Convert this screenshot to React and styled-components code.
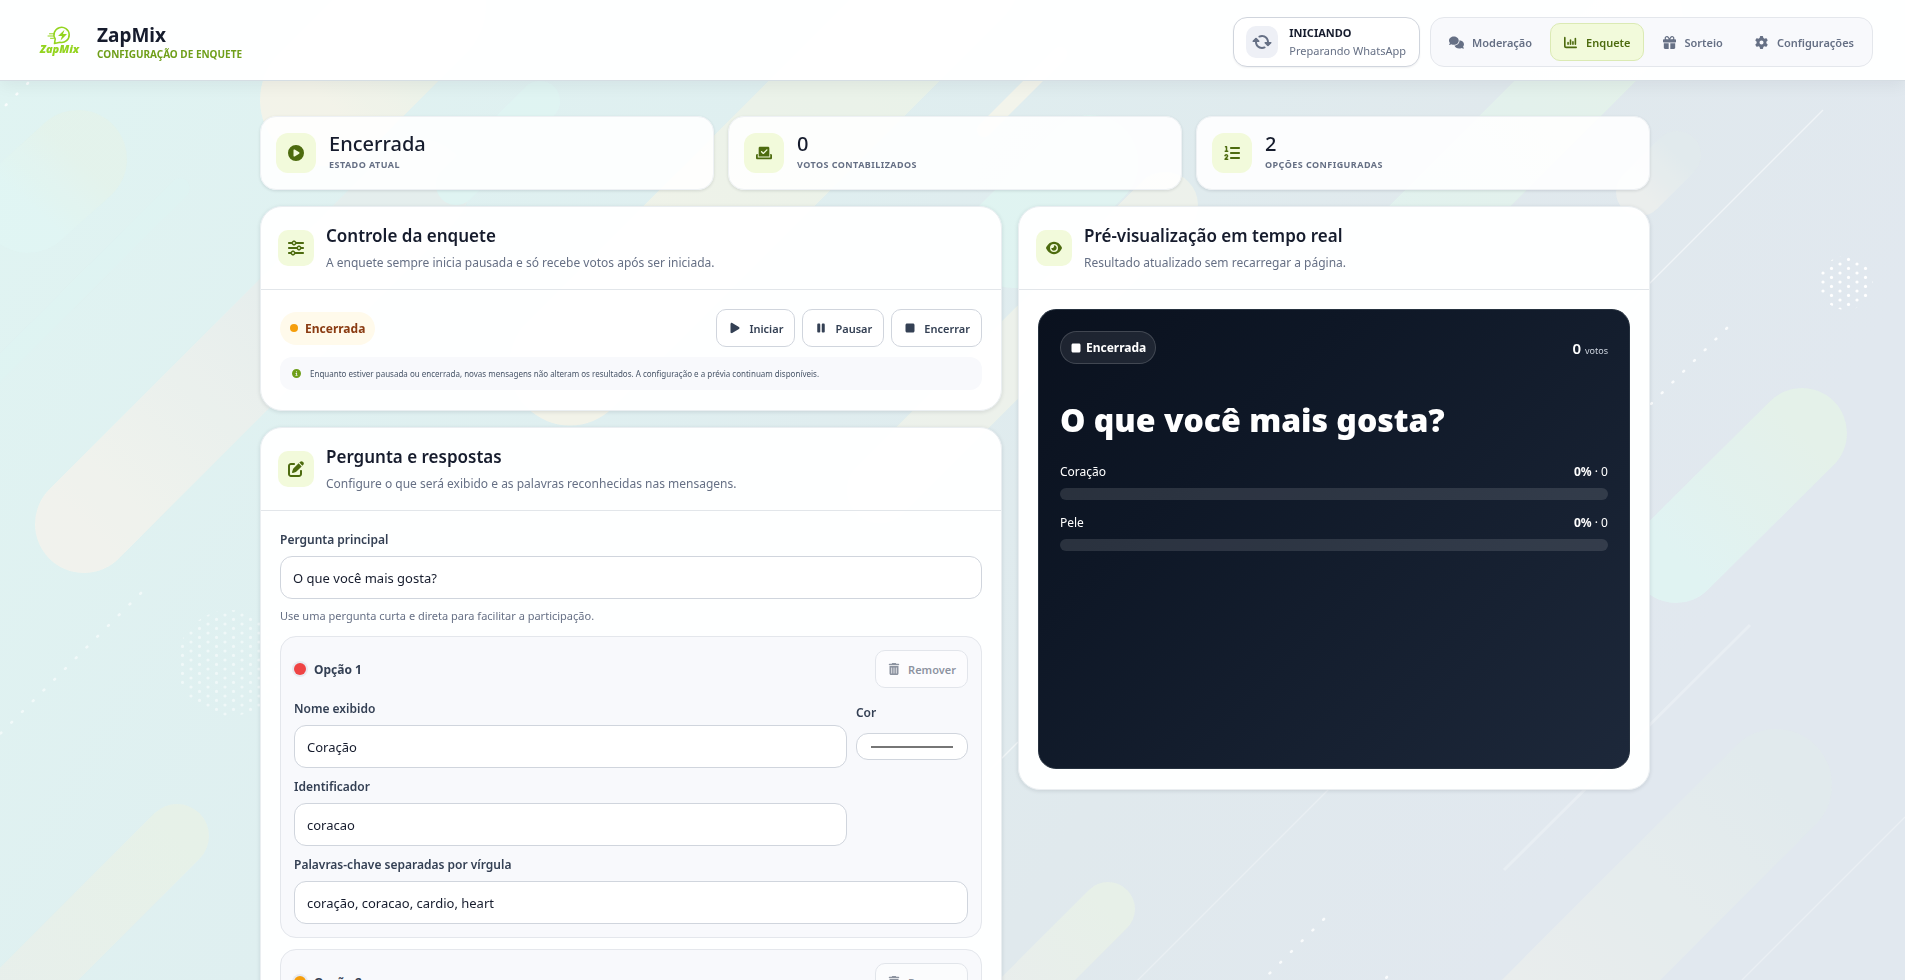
import { useState } from "react";
import styled, { createGlobalStyle, css } from "styled-components";
import {
  FaChartColumn,
  FaCheckToSlot,
  FaCircleInfo,
  FaCirclePlay,
  FaComments,
  FaEye,
  FaGear,
  FaGift,
  FaListOl,
  FaPause,
  FaPenToSquare,
  FaPlay,
  FaRotate,
  FaSliders,
  FaStop,
  FaTrashCan,
} from "react-icons/fa6";

const GlobalStyle = createGlobalStyle`
  :root {
    --ink: #161c2d;
    --text: #344054;
    --muted: #667085;
    --line: #e4e7ec;
    --border: #d0d5dd;
    --soft: #f8f9fc;
    --lime: #f2fadb;
    --lime-dark: #4d6b0f;
    --green: #6f9f1a;
  }

  * {
    box-sizing: border-box;
  }

  html {
    height: 100%;
    overflow: hidden;
  }

  body {
    margin: 0;
    height: 100%;
    overflow: hidden auto;
    scrollbar-width: none;
    font-family: "Noto Sans", "Open Sans", sans-serif;
    font-size: 13px;
    color: var(--ink);
    background: #e1edf0;
  }

  button,
  input {
    font-family: inherit;
  }
`;

const Backdrop = styled.svg`
  position: fixed;
  inset: 0;
  width: 100%;
  height: 100%;
  z-index: -1;
`;

/* Header */

const Header = styled.header`
  display: flex;
  align-items: center;
  justify-content: space-between;
  padding: 17px 32px 13px;
  background: rgba(255, 255, 255, 0.97);
  border-bottom: 1px solid #d5dde3;
  box-shadow: 0 4px 16px rgba(16, 24, 40, 0.06);
`;

const Brand = styled.div`
  display: flex;
  align-items: center;
  gap: 9px;
`;

const Logo = styled.svg`
  width: 56px;
  height: 40px;
`;

const BrandName = styled.strong`
  display: block;
  font-size: 19px;
  font-weight: 700;
  line-height: 24px;
`;

const BrandSection = styled.span`
  display: block;
  font-size: 10px;
  font-weight: 700;
  line-height: 14px;
  text-transform: uppercase;
  color: var(--green);
`;

const HeaderActions = styled.div`
  display: flex;
  align-items: center;
  gap: 10px;
`;

const Status = styled.div`
  display: flex;
  align-items: center;
  gap: 11px;
  height: 50px;
  padding: 0 13px 0 12px;
  background: #fff;
  border: 1px solid var(--border);
  border-radius: 14px;
  box-shadow: 0 1px 2px rgba(16, 24, 40, 0.06);
`;

const StatusIcon = styled.span`
  display: grid;
  place-items: center;
  width: 32px;
  height: 32px;
  border-radius: 10px;
  background: #eef0f6;
  color: #667085;
  font-size: 16px;

  svg {
    transform: rotate(45deg);
  }
`;

const StatusTitle = styled.strong`
  display: block;
  font-size: 11px;
  font-weight: 700;
  line-height: 18px;
`;

const StatusText = styled.span`
  display: block;
  font-size: 11px;
  line-height: 18px;
  color: var(--muted);
`;

const Nav = styled.nav`
  display: flex;
  gap: 5px;
  padding: 5px;
  border: 1px solid var(--line);
  border-radius: 14px;
  background: var(--soft);
`;

const NavLink = styled.a`
  display: flex;
  align-items: center;
  gap: 8px;
  height: 38px;
  padding: 0 12px;
  border: 1px solid ${({ $active }) => ($active ? "#dbeab4" : "transparent")};
  border-radius: 10px;
  background: ${({ $active }) => ($active ? "var(--lime)" : "transparent")};
  color: ${({ $active }) => ($active ? "var(--lime-dark)" : "var(--muted)")};
  font-size: 11px;
  font-weight: 600;
  text-decoration: none;

  svg {
    width: 15px;
    height: 13px;
  }
`;

/* Page */

const Page = styled.main`
  max-width: 1395px;
  margin: 0 auto;
  padding: 35px 0 32px 5px;
`;

const Stats = styled.section`
  display: grid;
  grid-template-columns: repeat(3, 1fr);
  gap: 14px;
  margin-bottom: 16px;
`;

const StatCard = styled.article`
  display: flex;
  align-items: center;
  gap: 13px;
  height: 74px;
  padding: 0 15px;
  border: 1px solid #eef1f4;
  border-radius: 16px;
  background: rgba(255, 255, 255, 0.9);
  box-shadow: 0 1px 3px rgba(16, 24, 40, 0.12);
`;

const IconTile = styled.span`
  display: grid;
  place-items: center;
  flex: none;
  width: ${({ $size }) => $size}px;
  height: ${({ $size }) => $size}px;
  border-radius: ${({ $size }) => ($size > 36 ? 12 : 10)}px;
  background: var(--lime);
  color: var(--lime-dark);
  font-size: 16px;
`;

const StatValue = styled.strong`
  display: block;
  font-size: 20px;
  font-weight: 500;
  line-height: 24px;
`;

const StatLabel = styled.span`
  display: block;
  font-size: 9px;
  font-weight: 700;
  line-height: 18px;
  letter-spacing: 0.05em;
  text-transform: uppercase;
  color: var(--muted);
`;

const Columns = styled.div`
  display: grid;
  grid-template-columns: 54fr 46fr;
  align-items: start;
  gap: 16px;
`;

const Column = styled.div`
  display: grid;
  gap: 16px;
  min-width: 0;
`;

const Panel = styled.section`
  border: 1px solid #eaeef1;
  border-radius: 22px;
  background: rgba(255, 255, 255, 0.97);
  box-shadow: 0 1px 4px rgba(16, 24, 40, 0.12);
`;

const PanelHeader = styled.header`
  display: flex;
  align-items: center;
  gap: 12px;
  height: 83px;
  padding: 0 17px;
  border-bottom: 1px solid #e2e6ea;
`;

const PanelTitle = styled.h2`
  margin: 0;
  padding-top: 2px;
  font-size: 17px;
  font-weight: 600;
  line-height: 28px;
`;

const PanelText = styled.p`
  margin: 0;
  font-size: 12px;
  line-height: 26px;
  color: var(--muted);
`;

const PanelBody = styled.div`
  padding: 19px 19px 20px;
`;

/* Poll control */

const ControlRow = styled.div`
  display: flex;
  align-items: center;
  justify-content: space-between;
`;

const StateBadge = styled.span`
  display: inline-flex;
  align-items: center;
  gap: 7px;
  height: 33px;
  padding: 0 10px;
  border-radius: 17px;
  background: #fffaeb;
  color: #8a3b12;
  font-size: 12px;
  font-weight: 700;

  &::before {
    content: "";
    width: 8px;
    height: 8px;
    border-radius: 50%;
    background: #f59e0b;
  }
`;

const ButtonGroup = styled.div`
  display: flex;
  gap: 7px;
`;

const Button = styled.button`
  display: inline-flex;
  align-items: center;
  gap: 7px;
  height: 38px;
  padding: 0 11px;
  border: 1px solid var(--border);
  border-radius: 10px;
  background: #fff;
  color: var(--text);
  font-size: 11px;
  font-weight: 600;

  svg {
    width: 14px;
    height: 12px;
  }

  &:disabled {
    opacity: 0.55;
  }
`;

const Notice = styled.p`
  display: flex;
  align-items: center;
  gap: 9px;
  height: 33px;
  margin: 10px 0 0;
  padding: 0 12px;
  border-radius: 12px;
  background: var(--soft);
  color: #475467;
  font-size: 8px;

  svg {
    color: var(--green);
    font-size: 9px;
  }
`;

/* Form */

const Field = styled.div`
  display: grid;
  gap: 6px;
  min-width: 0;
`;

const Label = styled.label`
  font-size: 12px;
  font-weight: 600;
  line-height: 20px;
  color: var(--text);
`;

const boxStyle = css`
  width: 100%;
  border: 1px solid var(--border);
  border-radius: 12px;
  background: #fff;
`;

const TextInput = styled.input`
  ${boxStyle}
  height: 43px;
  padding: 0 12px;
  font-size: 13px;
  color: var(--ink);
`;

const ColorInput = styled.input`
  ${boxStyle}
  appearance: none;
  height: 27px;
  margin: 4px 0;
  padding: 12px 14px;

  &::-webkit-color-swatch-wrapper {
    padding: 0;
  }

  &::-webkit-color-swatch {
    border: 1px solid #767676;
  }
`;

const Hint = styled.small`
  font-size: 11px;
  line-height: 22px;
  color: var(--muted);
`;

const Options = styled.div`
  display: grid;
  gap: 11px;
  margin-top: 9px;
`;

const OptionCard = styled.fieldset`
  min-width: 0;
  margin: 0;
  padding: 13px;
  border: 1px solid var(--line);
  border-radius: 16px;
  background: var(--soft);
`;

const OptionHeader = styled.div`
  display: flex;
  align-items: center;
  justify-content: space-between;
`;

const OptionTitle = styled.span`
  display: flex;
  align-items: center;
  gap: 8px;
  font-size: 12px;
  font-weight: 700;
  color: var(--text);

  &::before {
    content: "";
    width: 12px;
    height: 12px;
    border-radius: 50%;
    background: ${({ $color }) => $color};
    box-shadow: 0 0 0 2px #e8eaf0;
  }
`;

const OptionGrid = styled.div`
  display: grid;
  grid-template-columns: 1fr 112px;
  align-items: center;
  gap: 9px;
  margin-top: 11px;
`;

const WideField = styled(Field)`
  grid-column: 1 / -1;
`;

const OptionField = styled(Field)`
  grid-column: 1;
`;

/* Preview */

const Preview = styled.div`
  min-height: 460px;
  padding: 21px;
  border: 1px solid #26313f;
  border-radius: 18px;
  background: linear-gradient(135deg, #0a111e, #0e1726 30%, #1d283a);
  color: #fff;
`;

const PreviewTop = styled.div`
  display: flex;
  align-items: center;
  justify-content: space-between;
`;

const PreviewBadge = styled.span`
  display: inline-flex;
  align-items: center;
  gap: 4px;
  height: 33px;
  padding: 0 9px;
  border: 1px solid rgba(255, 255, 255, 0.16);
  border-radius: 17px;
  background: rgba(255, 255, 255, 0.08);
  font-size: 12px;
  font-weight: 700;

  svg {
    font-size: 12px;
  }
`;

const PreviewVotes = styled.strong`
  font-size: 15px;
  font-weight: 600;

  small {
    font-size: 9px;
    font-weight: 400;
    color: #cbd2dc;
  }
`;

const PreviewQuestion = styled.h3`
  margin: 36px 0 22px;
  font-size: 32px;
  font-weight: 900;
  line-height: 40px;
`;

const Result = styled.div`
  margin-bottom: 13px;
`;

const ResultRow = styled.div`
  display: flex;
  justify-content: space-between;
  font-size: 12px;
  line-height: 20px;

  b {
    font-weight: 700;
  }
`;

const ResultTrack = styled.div`
  height: 12px;
  margin-top: 6px;
  border-radius: 6px;
  background: rgba(255, 255, 255, 0.12);
  overflow: hidden;
`;

const ResultBar = styled.div`
  height: 100%;
  background: ${({ $color }) => $color};
`;

const navItems = [
  { label: "Moderação", icon: FaComments },
  { label: "Enquete", icon: FaChartColumn, active: true },
  { label: "Sorteio", icon: FaGift },
  { label: "Configurações", icon: FaGear },
];

const initialOptions = [
  { name: "Coração", key: "coracao", words: "coração, coracao, cardio, heart", color: "#ef4444" },
  { name: "Pele", key: "pele", words: "pele", color: "#f59e0b" },
];

function Background() {
  return (
    <Backdrop viewBox="0 0 1905 980" preserveAspectRatio="none" aria-hidden="true">
      <defs>
        <linearGradient id="base" x1="0" y1="0" x2="1" y2="0.3">
          <stop offset="0" stopColor="#e0f4f2" />
          <stop offset="0.4" stopColor="#dfeff0" />
          <stop offset="0.75" stopColor="#e0e9ed" />
          <stop offset="1" stopColor="#e1e8ef" />
        </linearGradient>
        <linearGradient id="cream" x1="0" y1="1" x2="1" y2="0">
          <stop offset="0" stopColor="#f4f3ec" />
          <stop offset="0.6" stopColor="#e8eeec" />
          <stop offset="1" stopColor="#e5eeec" />
        </linearGradient>
        <linearGradient id="sand" x1="0" y1="1" x2="1" y2="0">
          <stop offset="0" stopColor="#eaeeec" />
          <stop offset="1" stopColor="#e8f1e7" />
        </linearGradient>
        <linearGradient id="yellow" x1="0" y1="1" x2="1" y2="0">
          <stop offset="0" stopColor="#f6f4e8" />
          <stop offset="1" stopColor="#e8f2e8" />
        </linearGradient>
        <linearGradient id="mint" x1="0" y1="1" x2="1" y2="0">
          <stop offset="0" stopColor="#e0f5f3" />
          <stop offset="1" stopColor="#e4f2e8" />
        </linearGradient>
        <linearGradient id="fade" x1="0" y1="1" x2="1" y2="0">
          <stop offset="0" stopColor="#ecefed" />
          <stop offset="1" stopColor="#e1eaec" />
        </linearGradient>
        <pattern id="dots" width="17" height="9" patternUnits="userSpaceOnUse">
          <circle cx="4" cy="3" r="1.6" fill="#fff" />
          <circle cx="12.5" cy="7.4" r="1.6" fill="#fff" />
        </pattern>
      </defs>
      <rect width="1905" height="980" fill="url(#base)" />
      <g fill="none" strokeLinecap="round" opacity="0.85">
        <path d="M326 100 L420 6" stroke="url(#yellow)" strokeWidth="132" />
        <path d="M28 204 L78 159" stroke="url(#mint)" strokeWidth="98" opacity="0.8" />
        <path d="M-20 388 L180 188" stroke="#dff5f3" strokeWidth="20" opacity="0.5" />
        <path d="M84 524 L420 188" stroke="url(#cream)" strokeWidth="98" />
        <path d="M-80 1093 L177 836" stroke="url(#sand)" strokeWidth="64" />
        <path d="M456 185 L540 101" stroke="#dff5f3" strokeWidth="40" />
        <path d="M570 365 L960 -25" stroke="url(#yellow)" strokeWidth="121" />
        <path d="M1013 240 L1090 163" stroke="#dff5f1" strokeWidth="96" />
        <path d="M880 490 L1165 205" stroke="#eff3ea" strokeWidth="66" />
        <path d="M984 130 L1060 54" stroke="#f6f5ea" strokeWidth="14" />
        <path d="M1250 406 L1640 16" stroke="url(#mint)" strokeWidth="86" />
        <path d="M1640 192 L1677 155" stroke="url(#fade)" strokeWidth="48" />
        <path d="M1676 558 L1802 433" stroke="url(#mint)" strokeWidth="90" />
        <path d="M1500 1061 L1776 785" stroke="url(#fade)" strokeWidth="112" />
        <path d="M1000 1017 L1108 909" stroke="url(#sand)" strokeWidth="54" />
      </g>
      <g fill="none" stroke="#fff" strokeOpacity="0.5" strokeWidth="1.4">
        <path d="M1823 110 L1630 303" />
        <path d="M1905 817 L1742 980" strokeOpacity="0.3" />
        <path d="M1335 783 L1137 981" strokeOpacity="0.3" />
        <path d="M1750 625 L1504 870" strokeWidth="3" strokeOpacity="0.25" />
        <path d="M1018 742 L900 860" />
      </g>
      <g fill="none" stroke="#fff" strokeWidth="2.6" strokeLinecap="round" strokeDasharray="1 14.2" opacity="0.8">
        <path d="M1727 328 L1640 415" />
        <path d="M141 593 L0 734" strokeOpacity="0.7" />
        <path d="M28 83 L0 111" />
        <path d="M1324 919 L1262 981" />
        <path d="M1387 977 L1380 984" />
      </g>
      <circle cx="1846" cy="283" r="27" fill="url(#dots)" />
      <circle cx="230" cy="663" r="53" fill="url(#dots)" opacity="0.5" />
    </Backdrop>
  );
}

function BrandLogo() {
  return (
    <Logo viewBox="0 0 56 40" role="img" aria-label="ZapMix">
      <g fill="none" stroke="#93d41f" strokeWidth="1.6" strokeLinecap="round" strokeLinejoin="round">
        <path d="M22.5 21.5 L23.2 17 A7.6 7.6 0 1 1 28 20.3 Z" />
        <path d="M17.5 11.8 h4.5 M16 14 h5.5 M18.5 16.3 h3" strokeWidth="1" />
      </g>
      <path d="M32.5 7.8 L26 14 h4 L28.5 18.6 L35 12 h-4 Z" fill="#93d41f" />
      <text
        x="8"
        y="31"
        fill="#93d41f"
        fontFamily="Noto Sans"
        fontSize="11"
        fontWeight="900"
        fontStyle="italic"
      >
        ZapMix
      </text>
    </Logo>
  );
}

function PanelHeading({ icon: Icon, title, text }) {
  return (
    <PanelHeader>
      <IconTile $size={36}><Icon /></IconTile>
      <div>
        <PanelTitle>{title}</PanelTitle>
        <PanelText>{text}</PanelText>
      </div>
    </PanelHeader>
  );
}

function Stat({ icon: Icon, value, label }) {
  return (
    <StatCard>
      <IconTile $size={40}><Icon /></IconTile>
      <div>
        <StatValue>{value}</StatValue>
        <StatLabel>{label}</StatLabel>
      </div>
    </StatCard>
  );
}

function Option({ option, index, onChange, onRemove, canRemove }) {
  const id = `option-${index}`;
  const bind = (field) => ({
    id: `${id}-${field}`,
    value: option[field],
    onChange: (e) => onChange(index, field, e.target.value),
  });

  return (
    <OptionCard aria-label={`Opção ${index + 1}`}>
      <OptionHeader>
        <OptionTitle $color={option.color}>Opção {index + 1}</OptionTitle>
        <Button type="button" disabled={!canRemove} onClick={() => onRemove(index)}>
          <FaTrashCan /> Remover
        </Button>
      </OptionHeader>
      <OptionGrid>
        <Field>
          <Label htmlFor={`${id}-name`}>Nome exibido</Label>
          <TextInput {...bind("name")} />
        </Field>
        <Field>
          <Label htmlFor={`${id}-color`}>Cor</Label>
          <ColorInput type="color" {...bind("color")} />
        </Field>
        <OptionField>
          <Label htmlFor={`${id}-key`}>Identificador</Label>
          <TextInput {...bind("key")} />
        </OptionField>
        <WideField>
          <Label htmlFor={`${id}-words`}>Palavras-chave separadas por vírgula</Label>
          <TextInput {...bind("words")} />
        </WideField>
      </OptionGrid>
    </OptionCard>
  );
}

export default function App() {
  const [question, setQuestion] = useState("O que você mais gosta?");
  const [options, setOptions] = useState(initialOptions);
  const [pollState, setPollState] = useState("Encerrada");

  const handleChange = (index, field, value) => {
    setOptions(options.map((o, i) => (i === index ? { ...o, [field]: value } : o)));
  };

  const handleRemove = (index) => {
    setOptions(options.filter((_, i) => i !== index));
  };

  return (
    <>
      <GlobalStyle />
      <Background />
      <Header>
        <Brand>
          <BrandLogo />
          <div>
            <BrandName>ZapMix</BrandName>
            <BrandSection>Configuração de enquete</BrandSection>
          </div>
        </Brand>
        <HeaderActions>
          <Status role="status">
            <StatusIcon><FaRotate /></StatusIcon>
            <div>
              <StatusTitle>INICIANDO</StatusTitle>
              <StatusText>Preparando WhatsApp</StatusText>
            </div>
          </Status>
          <Nav>
            {navItems.map(({ label, icon: Icon, active }) => (
              <NavLink key={label} href="#" $active={active}>
                <Icon /> {label}
              </NavLink>
            ))}
          </Nav>
        </HeaderActions>
      </Header>

      <Page>
        <Stats>
          <Stat icon={FaCirclePlay} value={pollState} label="Estado atual" />
          <Stat icon={FaCheckToSlot} value="0" label="Votos contabilizados" />
          <Stat icon={FaListOl} value={options.length} label="Opções configuradas" />
        </Stats>

        <Columns>
          <Column>
            <Panel>
              <PanelHeading
                icon={FaSliders}
                title="Controle da enquete"
                text="A enquete sempre inicia pausada e só recebe votos após ser iniciada."
              />
              <PanelBody>
                <ControlRow>
                  <StateBadge>{pollState}</StateBadge>
                  <ButtonGroup>
                    <Button type="button" onClick={() => setPollState("Ativa")}><FaPlay /> Iniciar</Button>
                    <Button type="button" onClick={() => setPollState("Pausada")}><FaPause /> Pausar</Button>
                    <Button type="button" onClick={() => setPollState("Encerrada")}><FaStop /> Encerrar</Button>
                  </ButtonGroup>
                </ControlRow>
                <Notice>
                  <FaCircleInfo />
                  Enquanto estiver pausada ou encerrada, novas mensagens não alteram os resultados. A configuração e a prévia continuam disponíveis.
                </Notice>
              </PanelBody>
            </Panel>

            <Panel>
              <PanelHeading
                icon={FaPenToSquare}
                title="Pergunta e respostas"
                text="Configure o que será exibido e as palavras reconhecidas nas mensagens."
              />
              <PanelBody>
                <Field>
                  <Label htmlFor="question">Pergunta principal</Label>
                  <TextInput id="question" value={question} onChange={(e) => setQuestion(e.target.value)} />
                  <Hint>Use uma pergunta curta e direta para facilitar a participação.</Hint>
                </Field>
                <Options>
                  {options.map((option, index) => (
                    <Option
                      key={index}
                      option={option}
                      index={index}
                      onChange={handleChange}
                      onRemove={handleRemove}
                      canRemove={options.length > 2}
                    />
                  ))}
                </Options>
              </PanelBody>
            </Panel>
          </Column>

          <Panel>
            <PanelHeading
              icon={FaEye}
              title="Pré-visualização em tempo real"
              text="Resultado atualizado sem recarregar a página."
            />
            <PanelBody>
              <Preview>
                <PreviewTop>
                  <PreviewBadge><FaStop /> {pollState}</PreviewBadge>
                  <PreviewVotes>0 <small>votos</small></PreviewVotes>
                </PreviewTop>
                <PreviewQuestion>{question}</PreviewQuestion>
                {options.map((option, index) => (
                  <Result key={index}>
                    <ResultRow>
                      <span>{option.name}</span>
                      <span><b>0%</b> · 0</span>
                    </ResultRow>
                    <ResultTrack>
                      <ResultBar $color={option.color} style={{ width: "0%" }} />
                    </ResultTrack>
                  </Result>
                ))}
              </Preview>
            </PanelBody>
          </Panel>
        </Columns>
      </Page>
    </>
  );
}
